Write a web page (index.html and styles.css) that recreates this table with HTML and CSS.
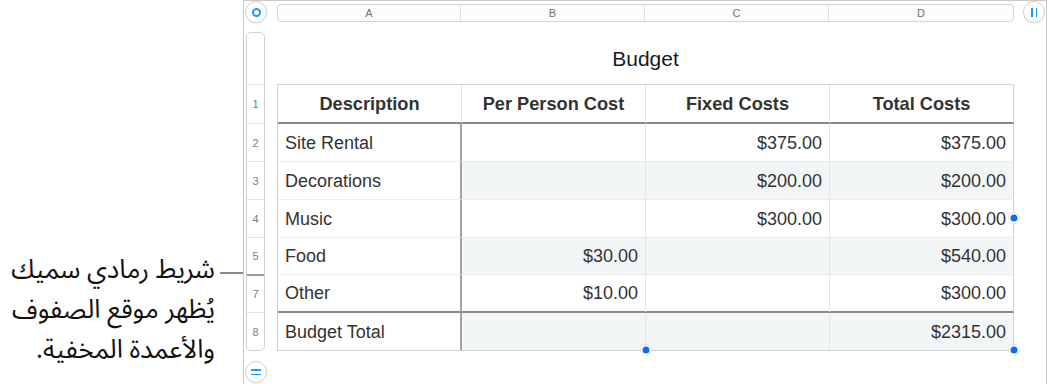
FILE: index.html
```html
<!DOCTYPE html>
<html lang="en">
<head>
<meta charset="utf-8">
<title>Budget</title>
<link rel="stylesheet" href="styles.css">
</head>
<body>
<div class="page">
  <div class="caption">
    <div class="callout">
      <p class="callout-text" dir="rtl" lang="ar">شريط رمادي سميك<br>يُظهر موقع الصفوف<br>والأعمدة المخفية.</p>
      <div class="leader"></div>
    </div>
  </div>

  <div class="panel">
    <div class="corner">
      <div class="circle-btn"><span class="ring"></span></div>
    </div>
    <div class="colheads">
      <div class="colhead">A</div>
      <div class="colhead">B</div>
      <div class="colhead">C</div>
      <div class="colhead">D</div>
    </div>
    <div class="corner-right">
      <div class="circle-btn"><span class="bars"><i></i><i></i></span></div>
    </div>

    <div class="side">
      <div class="rowheads">
        <div class="rowhead rowhead-title"></div>
        <div class="rowhead rowhead-first">1</div>
        <div class="rowhead">2</div>
        <div class="rowhead">3</div>
        <div class="rowhead">4</div>
        <div class="rowhead rowhead-short">5</div>
        <div class="rowhead rowhead-hidden">7</div>
        <div class="rowhead">8</div>
      </div>
      <div class="circle-btn circle-btn-bottom"><span class="eq"><i></i><i></i></span></div>
    </div>

    <div class="sheet">
      <div class="title">Budget</div>
      <div class="table">
        <div class="cell head">Description</div>
        <div class="cell head">Per Person Cost</div>
        <div class="cell head">Fixed Costs</div>
        <div class="cell head">Total Costs</div>

        <div class="cell label">Site Rental</div>
        <div class="cell num"></div>
        <div class="cell num">$375.00</div>
        <div class="cell num">$375.00</div>

        <div class="cell label">Decorations</div>
        <div class="cell num alt"></div>
        <div class="cell num alt">$200.00</div>
        <div class="cell num alt">$200.00</div>

        <div class="cell label">Music</div>
        <div class="cell num"></div>
        <div class="cell num">$300.00</div>
        <div class="cell num">$300.00</div>

        <div class="cell label short">Food</div>
        <div class="cell num alt short">$30.00</div>
        <div class="cell num alt short"></div>
        <div class="cell num alt short">$540.00</div>

        <div class="cell label pre-foot">Other</div>
        <div class="cell num pre-foot">$10.00</div>
        <div class="cell num pre-foot"></div>
        <div class="cell num pre-foot">$300.00</div>

        <div class="cell label foot">Budget Total</div>
        <div class="cell num alt foot"></div>
        <div class="cell num alt foot"></div>
        <div class="cell num alt foot">$2315.00</div>

        <span class="handle handle-right"></span>
        <span class="handle handle-bottom"></span>
        <span class="handle handle-corner"></span>
      </div>
    </div>
  </div>
</div>
</body>
</html>
```
FILE: styles.css
```css
* { box-sizing: border-box; }

html, body {
  margin: 0;
  padding: 0;
  background: #ffffff;
}

body {
  font-family: "Liberation Sans", Arial, sans-serif;
  color: #333333;
}

.page {
  display: flex;
  width: 1049px;
  height: 384px;
  overflow: hidden;
}

/* ---------- caption ---------- */
.caption {
  flex: none;
  width: 243px;
}

.callout {
  display: grid;
  grid-template-columns: 1fr 23px;
  column-gap: 5px;
  margin-top: 250px;
}

.callout-text {
  margin: 0;
  font-family: "Noto Sans Arabic", "DejaVu Sans", sans-serif;
  font-size: 26px;
  line-height: 40px;
  color: #111111;
  text-align: right;
}

.leader {
  height: 2px;
  margin-top: 22px;
  background: #8a8a8a;
}

/* ---------- panel ---------- */
.panel {
  flex: none;
  width: 804px;
  height: 384px;
  border: 1px solid #c9c9c9;
  border-bottom: none;
  display: grid;
  grid-template-columns: 33px 737px 1fr;
  grid-template-rows: 24px 1fr;
}

.circle-btn {
  width: 22px;
  height: 22px;
  border-radius: 50%;
  border: 1px solid #d2d2d2;
  background: #ffffff;
  box-shadow: 0 1px 1px rgba(0, 0, 0, 0.06);
  display: flex;
  align-items: center;
  justify-content: center;
}

.corner { padding-left: 1px; }

.ring {
  width: 9px;
  height: 9px;
  border-radius: 50%;
  border: 2px solid #2496f3;
}

.corner-right { padding-left: 9px; }

.bars, .eq {
  display: flex;
  gap: 3px;
}
.bars i {
  display: block;
  width: 1.5px;
  height: 9px;
  background: #2496f3;
}
.eq { flex-direction: column; gap: 3px; }
.eq i {
  display: block;
  width: 10px;
  height: 1.5px;
  background: #2496f3;
}

.colheads {
  margin-top: 3px;
  height: 18px;
  border: 1px solid #d4d4d4;
  border-radius: 4px;
  background: #fcfcfc;
  display: grid;
  grid-template-columns: 183px 184px 184px 1fr;
  overflow: hidden;
}

.colhead {
  font-size: 11px;
  line-height: 16px;
  color: #707070;
  text-align: center;
  border-right: 1px solid #dedede;
}
.colhead:last-child { border-right: none; }

/* ---------- row headers ---------- */
.side {
  padding-left: 2px;
  padding-top: 7px;
  display: flex;
  flex-direction: column;
  align-items: flex-start;
}

.rowheads {
  width: 19px;
  border: 1px solid #d2d2d2;
  border-radius: 5px;
  background: #ffffff;
  display: flex;
  flex-direction: column;
}

.rowhead {
  height: 38px;
  border-top: 1px solid #e2e2e2;
  font-size: 11px;
  color: #7a7a7a;
  display: flex;
  align-items: center;
  justify-content: center;
}

.rowhead-title {
  height: 51px;
  border-top: none;
}

.rowhead-first { height: 39px; }
.rowhead-short { height: 37px; }

.rowhead-hidden {
  border-top: 2px solid #9a9a9a;
}

.circle-btn-bottom {
  margin-top: 10px;
  margin-left: -1px;
}

/* ---------- sheet ---------- */
.sheet {
  display: flex;
  flex-direction: column;
}

.title {
  padding: 22px 0 13px;
  line-height: 24px;
  font-size: 21px;
  color: #1a1a1a;
  text-align: center;
}

.table {
  position: relative;
  width: 737px;
  display: grid;
  grid-template-columns: 184px 184px 184px 184px;
  border-left: 1px solid #d3d3d3;
  border-top: 1px solid #d3d3d3;
  border-bottom: 1px solid #d3d3d3;
}

.cell {
  height: 38px;
  border-right: 1px solid #e6e6e6;
  border-bottom: 1px solid #ececec;
  display: flex;
  align-items: center;
  font-size: 18px;
  color: #333333;
  padding: 1px 7px 0 7px;
  white-space: nowrap;
}

.cell:nth-child(4n) { border-right-color: #d3d3d3; }

.head {
  height: 39px;
  justify-content: center;
  font-weight: bold;
  font-size: 18.2px;
  color: #333333;
  border-bottom: 2px solid #8c8883;
}

.label {
  border-right: 2px solid #a3a3a3;
}

.num { justify-content: flex-end; }

.alt { background: #f2f6f6; }

.short { height: 37px; }

.pre-foot { border-bottom: 2px solid #8c8883; }

.foot { border-bottom: none; height: 37px; }

/* selection handles */
.handle {
  position: absolute;
  width: 11px;
  height: 11px;
  border-radius: 50%;
  background: #0a70e6;
  border: 2px solid #ffffff;
  box-shadow: 0 0 1px rgba(0, 0, 0, 0.35);
  transform: translate(-50%, -50%);
}
.handle-right { left: 100%; top: 50%; }
.handle-bottom { left: 50%; top: 100%; }
.handle-corner { left: 100%; top: 100%; }
```
